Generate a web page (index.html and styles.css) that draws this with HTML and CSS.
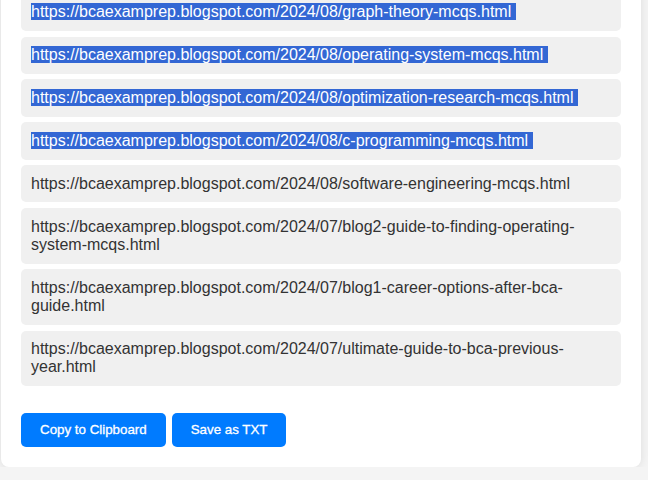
FILE: index.html
```html
<!DOCTYPE html>
<html lang="en">
<head>
<meta charset="utf-8">
<title>Extracted Links</title>
<link rel="stylesheet" href="styles.css">
</head>
<body>
<div class="card">
  <ul class="links">
    <li class="link"><span class="sel">https://bcaexamprep.blogspot.com/2024/08/graph-theory-mcqs.html</span></li>
    <li class="link"><span class="sel">https://bcaexamprep.blogspot.com/2024/08/operating-system-mcqs.html</span></li>
    <li class="link"><span class="sel">https://bcaexamprep.blogspot.com/2024/08/optimization-research-mcqs.html</span></li>
    <li class="link"><span class="sel">https://bcaexamprep.blogspot.com/2024/08/c-programming-mcqs.html</span></li>
    <li class="link">https://bcaexamprep.blogspot.com/2024/08/software-engineering-mcqs.html</li>
    <li class="link">https://bcaexamprep.blogspot.com/2024/07/blog2-guide-to-finding-operating-system-mcqs.html</li>
    <li class="link">https://bcaexamprep.blogspot.com/2024/07/blog1-career-options-after-bca-guide.html</li>
    <li class="link">https://bcaexamprep.blogspot.com/2024/07/ultimate-guide-to-bca-previous-year.html</li>
  </ul>
  <div class="actions">
    <button class="btn" type="button">Copy to Clipboard</button>
    <button class="btn" type="button">Save as TXT</button>
  </div>
</div>
</body>
</html>
```

FILE: styles.css
```css
html, body {
  margin: 0;
  padding: 0;
}

body {
  background: #f4f4f4;
  font-family: "Liberation Sans", Arial, sans-serif;
  color: #333;
  overflow: hidden;
}

.card {
  width: 600px;
  margin: -26.3px 0 0 1px;
  padding: 20px;
  background: #fff;
  border-radius: 8px;
  box-shadow: 0 0 10px rgba(0, 0, 0, 0.1);
}

.links {
  list-style: none;
  margin: 0;
  padding: 0;
  display: flex;
  flex-direction: column;
  gap: 5.6px;
}

.link {
  background: #f0f0f0;
  border-radius: 5px;
  padding: 9.45px 10px;
  font-size: 16px;
  line-height: 18.4px;
  color: #333;
}

.sel {
  background: #3367d4;
  color: #fff;
  padding-right: 5px;
}

.actions {
  display: flex;
  gap: 6px;
  margin-top: 26.5px;
}

.btn {
  font-family: "Liberation Sans", Arial, sans-serif;
  font-size: 13.333px;
  line-height: 16px;
  height: 34px;
  padding: 0 19px;
  border: 0;
  border-radius: 5px;
  background: #007bff;
  color: #fff;
  -webkit-text-stroke: 0.3px #fff;
}
```
